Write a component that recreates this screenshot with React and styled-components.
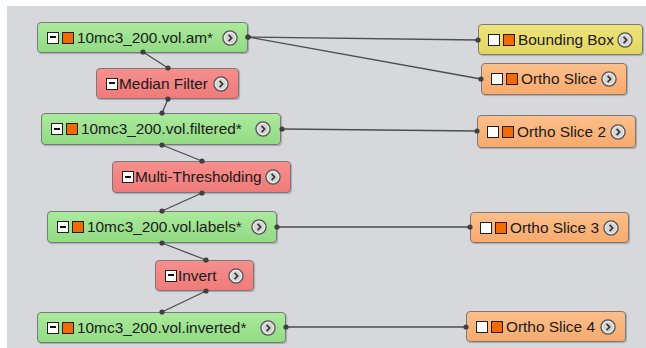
import React from "react";
import styled, { createGlobalStyle } from "styled-components";

const Global = createGlobalStyle`
  html, body {
    margin: 0;
    padding: 0;
    background: #ffffff;
    font-family: "Liberation Sans", Arial, sans-serif;
  }
`;

const OX = 7;
const OY = 6;

const palette = {
  data: ["#abea9d", "#92db83"],
  filter: ["#f78f8d", "#ee7b7a"],
  box: ["#eee37a", "#e2d660"],
  slice: ["#fcbf8b", "#f7aa6d"],
};

const Canvas = styled.div`
  position: relative;
  margin: ${OY}px 0 0 ${OX}px;
  width: ${646 - OX}px;
  height: ${348 - OY}px;
  background: #d7d8dc;
  overflow: hidden;
`;

const Wires = styled.svg`
  position: absolute;
  inset: 0;
  width: 100%;
  height: 100%;
  pointer-events: none;
  z-index: 2;
`;

const Node = styled.div`
  position: absolute;
  box-sizing: border-box;
  display: flex;
  align-items: center;
  padding: 0 9px 0 9px;
  border: 1px solid #7a7a7a;
  border-radius: 4px;
  background: linear-gradient(${(p) => palette[p.$kind][0]}, ${(p) => palette[p.$kind][1]});
  box-shadow: 1px 1px 1px rgba(0, 0, 0, 0.22);
  z-index: 1;
`;

const Icons = styled.div`
  display: flex;
  gap: 3px;
  margin-right: ${(p) => (p.$tight ? 1 : 3)}px;
`;

const Square = styled.span`
  position: relative;
  box-sizing: border-box;
  width: 12px;
  height: 12px;
  border: 1.5px solid #1e1e1e;
  background: ${(p) => (p.$fill ? "#f36b00" : "#ffffff")};

  ${(p) =>
    p.$minus &&
    `
    &::after {
      content: "";
      position: absolute;
      left: 2px;
      right: 2px;
      top: 3.5px;
      height: 2px;
      background: #111;
    }
  `}
`;

const Label = styled.span`
  font-size: 15.4px;
  color: #1a1a1a;
  white-space: nowrap;
  line-height: 1;
`;

const More = styled.svg`
  margin-left: auto;
  flex: none;
`;

function MoreButton() {
  return (
    <More width="16" height="16" viewBox="0 0 16 16">
      <circle cx="8" cy="8" r="7.1" fill="#d4d4d4" stroke="#555" strokeWidth="1.3" />
      <circle cx="8" cy="8" r="5.6" fill="none" stroke="#efefef" strokeWidth="0.9" />
      <path d="M6.6 4.9 L9.6 8 L6.6 11.1" fill="none" stroke="#333" strokeWidth="1.7" />
    </More>
  );
}

const nodes = [
  { label: "10mc3_200.vol.am*", kind: "data", x: 37, y: 22, w: 211, h: 31, icons: "minus" },
  { label: "Median Filter", kind: "filter", x: 96, y: 68, w: 143, h: 31, icons: "filter" },
  { label: "10mc3_200.vol.filtered*", kind: "data", x: 41, y: 113, w: 240, h: 32, icons: "minus" },
  { label: "Multi-Thresholding", kind: "filter", x: 112, y: 161, w: 179, h: 32, icons: "filter" },
  { label: "10mc3_200.vol.labels*", kind: "data", x: 47, y: 211, w: 230, h: 32, icons: "minus" },
  { label: "Invert", kind: "filter", x: 155, y: 260, w: 99, h: 31, icons: "filter" },
  { label: "10mc3_200.vol.inverted*", kind: "data", x: 37, y: 312, w: 249, h: 31, icons: "minus" },
  { label: "Bounding Box", kind: "box", x: 478, y: 24, w: 165, h: 31, icons: "empty" },
  { label: "Ortho Slice", kind: "slice", x: 481, y: 63, w: 146, h: 32, icons: "empty" },
  { label: "Ortho Slice 2", kind: "slice", x: 477, y: 115, w: 159, h: 33, icons: "empty" },
  { label: "Ortho Slice 3", kind: "slice", x: 470, y: 212, w: 159, h: 31, icons: "empty" },
  { label: "Ortho Slice 4", kind: "slice", x: 466, y: 311, w: 160, h: 31, icons: "empty" },
];

const edges = [
  [143, 52, 168, 68],
  [168, 99, 162, 113],
  [162, 145, 202, 161],
  [202, 193, 162, 211],
  [162, 243, 206, 260],
  [206, 291, 162, 312],
  [248, 37, 478, 40],
  [248, 37, 481, 79],
  [282, 129, 477, 131],
  [277, 227, 470, 227],
  [286, 327, 466, 327],
];

function NodeIcons({ type }) {
  if (type === "filter") {
    return (
      <Icons $tight>
        <Square $minus />
      </Icons>
    );
  }
  return (
    <Icons>
      {type === "minus" ? <Square $minus /> : <Square />}
      <Square $fill />
    </Icons>
  );
}

export default function App() {
  const dots = [];
  edges.forEach(([x1, y1, x2, y2]) => {
    dots.push([x1, y1], [x2, y2]);
  });

  return (
    <>
      <Global />
      <Canvas>
        {nodes.map((n) => (
          <Node
            key={n.label}
            $kind={n.kind}
            style={{ left: n.x - OX, top: n.y - OY, width: n.w, height: n.h }}
          >
            <NodeIcons type={n.icons} />
            <Label>{n.label}</Label>
            <MoreButton />
          </Node>
        ))}
        <Wires viewBox={`${OX} ${OY} ${646 - OX} ${348 - OY}`}>
          {edges.map(([x1, y1, x2, y2], i) => (
            <line key={i} x1={x1} y1={y1} x2={x2} y2={y2} stroke="#4d4d4d" strokeWidth="1.3" />
          ))}
          {dots.map(([x, y], i) => (
            <circle key={i} cx={x} cy={y} r="2.6" fill="#3f3f3f" />
          ))}
        </Wires>
      </Canvas>
    </>
  );
}
